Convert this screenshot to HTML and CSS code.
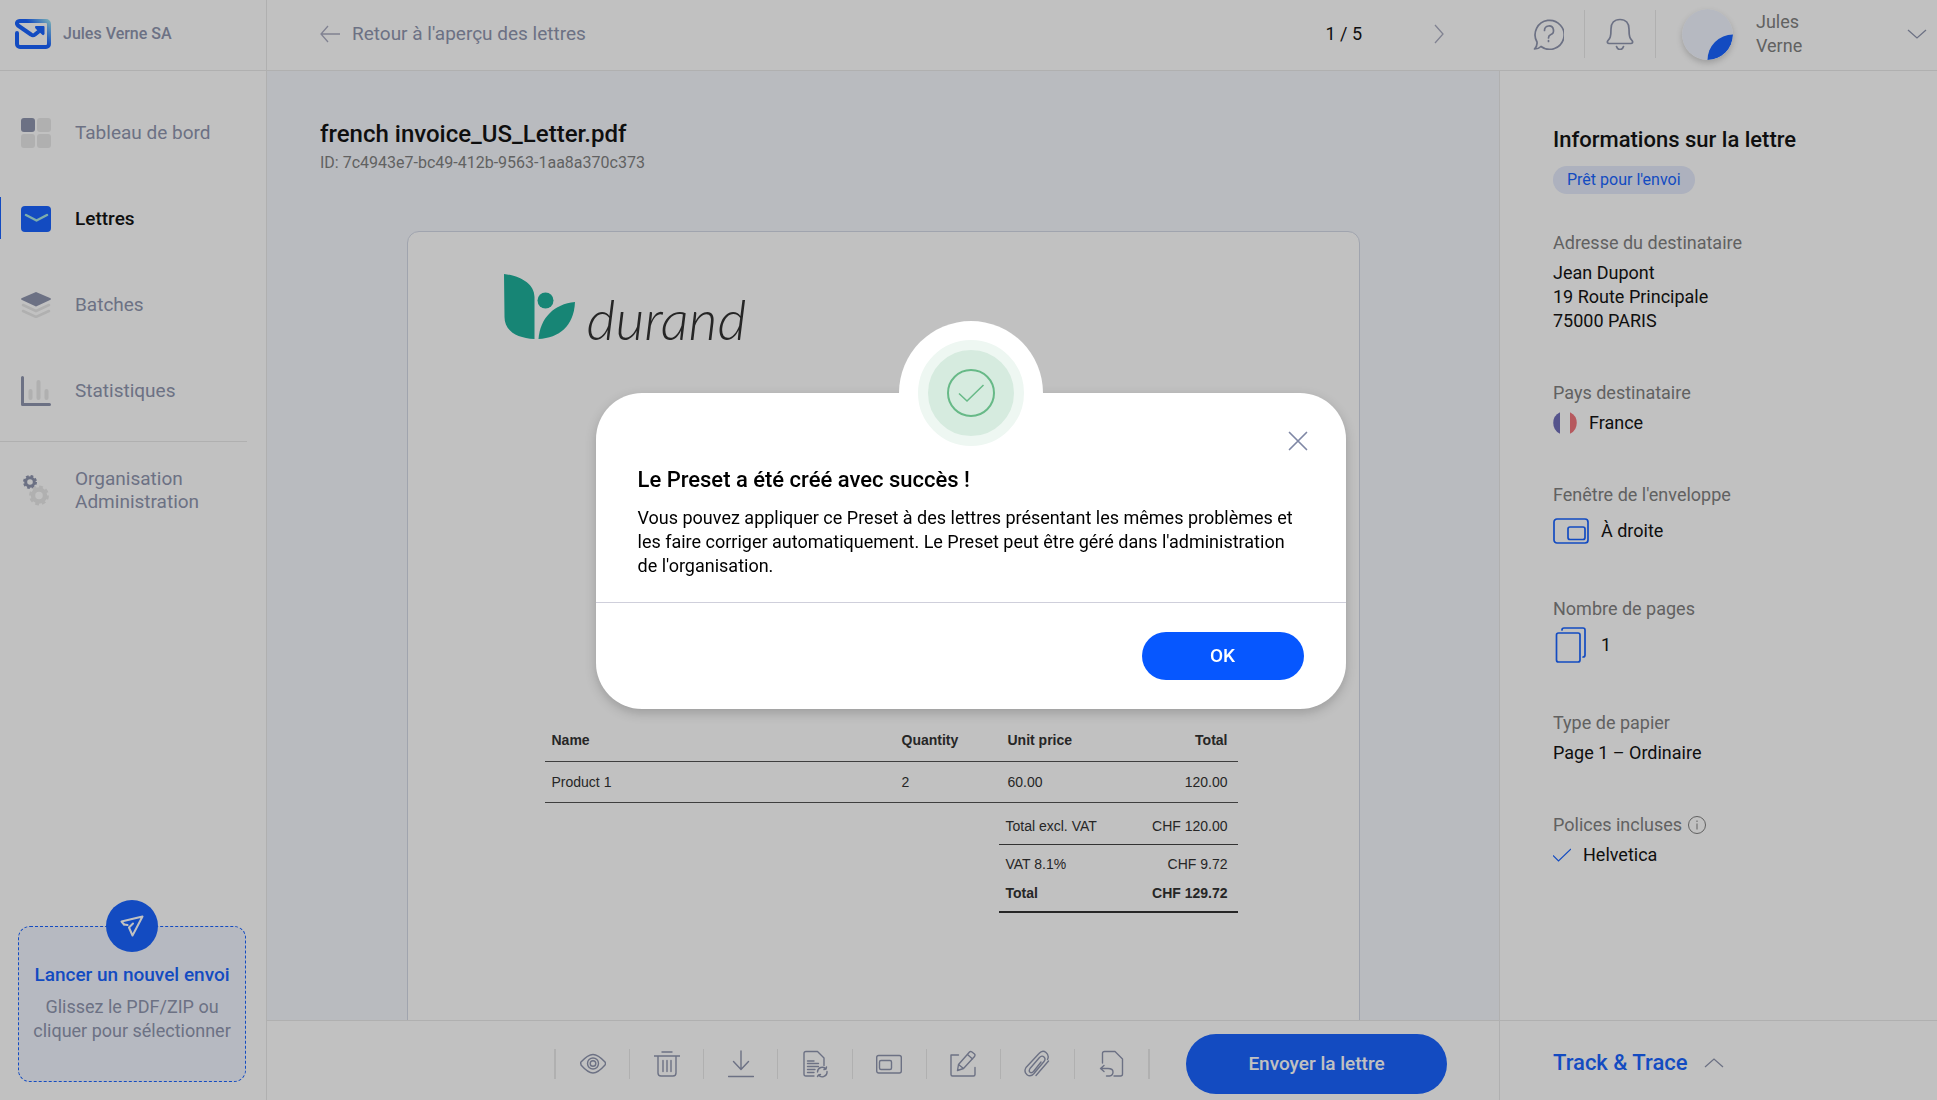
FILE: index.html
```html
<!DOCTYPE html>
<html lang="fr">
<head>
<meta charset="utf-8">
<meta name="viewport" content="width=device-width, initial-scale=1">
<title>french invoice_US_Letter.pdf</title>
<link rel="stylesheet" href="styles.css">
</head>
<body>
<div class="app">
  <header class="topbar">
    <a class="brand" href="#">
      <svg width="36" height="30" viewBox="0 0 36 30" fill="none" aria-hidden="true">
        <defs><linearGradient id="brandFade" x1="18" y1="16" x2="36" y2="0" gradientUnits="userSpaceOnUse"><stop offset="0.2" stop-color="#0657ff"/><stop offset="1" stop-color="#a5f0ee"/></linearGradient></defs>
        <path d="M2 14V25a3 3 0 0 0 3 3h26a3 3 0 0 0 3-3V5a3 3 0 0 0-3-3H5C2 2 1 4.500 3 6.500L16 15.500q2 1.500 4 0l5-4" stroke="url(#brandFade)" stroke-width="4" stroke-linecap="round" stroke-linejoin="round"/>
        <path d="M20 8q0-1 1-1h7.500q1 0 1 1v7q-1 2-2.500 .5l-6-5.500q-1-1-1-2z" fill="#0657ff"/>
      </svg>
      <span>Jules Verne SA</span>
    </a>
    <nav class="letter-nav" aria-label="Lettres">
      <a class="back" href="#">
        <svg width="20" height="18" viewBox="0 0 20 18" class="line pale" aria-hidden="true"><path d="M20 9H1M8 1L1 9l7 8"/></svg>
        <span>Retour à l'aperçu des lettres</span>
      </a>
      <span class="pager">1 / 5</span>
      <button class="plain" type="button" aria-label="Lettre suivante"><svg width="10" height="20" viewBox="0 0 10 20" class="line pale" aria-hidden="true"><path d="M1 1l8 9-8 9"/></svg></button>
    </nav>
    <div class="account">
      <button class="plain" type="button" aria-label="Aide"><svg width="31" height="32" viewBox="0 0 31 32" class="line thick" aria-hidden="true"><path d="M8 28.500a14.500 14.500 0 1 0-4-4.500q.5 4-2.500 7 4 0 6.500-2.500z"/><path d="M11.500 12.500a4.500 4.500 0 1 1 6 4.200q-2 .8-2 3.300M15.500 22.500v1"/></svg></button>
      <button class="plain bell" type="button" aria-label="Notifications"><svg width="28" height="32" viewBox="0 0 28 32" class="line thick" aria-hidden="true"><path d="M14 1.500c-6 0-9 4-9 9.500 0 8-1 9.500-3 11.500-1.500 2 0 3 1 3h22c1 0 2.500-1 1-3-2-2-3-3.500-3-11.500 0-5.500-3-9.500-9-9.500zM10.500 28.500q1 3 3.500 3t3.500-3"/></svg></button>
      <button class="plain profile" type="button">
        <svg class="avatar" width="51" height="51" viewBox="0 0 51 51" aria-hidden="true"><circle cx="25.500" cy="25.500" r="25.500" fill="#f0f4ff"/><path d="M25.500 51A25.500 25.500 0 0 1 51 25.500 25.500 25.500 0 0 1 25.500 51z" fill="#0657ff"/></svg>
        <span class="profile-name">Jules<br>Verne</span>
        <svg width="20" height="10" viewBox="0 0 20 10" class="line" aria-hidden="true"><path d="M1 1l9 8 9-8"/></svg>
      </button>
    </div>
  </header>

  <aside class="sidebar">
    <nav class="menu" aria-label="Menu principal">
      <a class="item" href="#"><svg width="30" height="30" viewBox="0 0 30 30" aria-hidden="true"><rect width="14" height="14" rx="3" fill="#868da8"/><rect x="16" width="14" height="14" rx="3" fill="#e7e7e7"/><rect y="16" width="14" height="14" rx="3" fill="#e7e7e7"/><rect x="16" y="16" width="14" height="14" rx="3" fill="#e7e7e7"/></svg><span>Tableau de bord</span></a>
      <a class="item active" href="#" aria-current="page"><svg width="30" height="26" viewBox="0 0 30 26" aria-hidden="true"><rect width="30" height="26" rx="4" fill="#0657ff"/><path d="M5 9l10.500 5.500L26 9" fill="none" stroke="#9fe3e0" stroke-width="2.500" stroke-linecap="round" stroke-linejoin="round"/></svg><span>Lettres</span></a>
      <a class="item" href="#"><svg width="30" height="26" viewBox="0 0 30 26" aria-hidden="true"><path d="M2 13l13 6 13-6M2 19l13 6 13-6" fill="none" stroke="#e7e7e7" stroke-width="2.500" stroke-linecap="round"/><path d="M15 0l14 6q2 1 0 2l-14 6.500L1 8q-2-1 0-2z" fill="#868da8"/></svg><span>Batches</span></a>
      <a class="item" href="#"><svg width="30" height="30" viewBox="0 0 30 30" fill="none" stroke-linecap="round" aria-hidden="true"><path d="M9.500 15v7M17.500 6v16M25.500 15v7" stroke="#e7e7e7" stroke-width="4"/><path d="M1.500 1.500v27h27" stroke="#868da8" stroke-width="3" stroke-linejoin="round"/></svg><span>Statistiques</span></a>
      <a class="item admin" href="#"><svg width="30" height="32" viewBox="0 0 30 32" fill="none" aria-hidden="true"><circle cx="9" cy="8" r="4.300" stroke="#868da8" stroke-width="3"/><circle cx="9" cy="8" r="6" stroke="#868da8" stroke-width="2" stroke-dasharray="2.700 2"/><circle cx="18" cy="21.500" r="6" stroke="#e7e7e7" stroke-width="4.500"/><circle cx="18" cy="21.500" r="8.700" stroke="#e7e7e7" stroke-width="2.500" stroke-dasharray="3.800 3"/></svg><span>Organisation<br>Administration</span></a>
    </nav>
    <button class="dropzone" type="button">
      <span class="dropzone-icon"><svg width="24" height="22" viewBox="0 0 24 22" fill="none" stroke="#fff" stroke-width="2" stroke-linejoin="round" stroke-linecap="round" aria-hidden="true"><path d="M4 9.500L1.500 6.500 22.500 1.500 12.500 20.500 9 12.500l4-4"/><path d="M4 9.500l3.500 .5"/></svg></span>
      <strong>Lancer un nouvel envoi</strong>
      <span>Glissez le PDF/ZIP ou cliquer pour sélectionner</span>
    </button>
  </aside>

  <main class="viewer">
    <h1>french invoice_US_Letter.pdf</h1>
    <p class="doc-id">ID: 7c4943e7-bc49-412b-9563-1aa8a370c373</p>
    <article class="sheet">
      <div class="sheet-logo">
        <svg width="71" height="65" viewBox="0 0 71 65" fill="#0caa93" aria-hidden="true"><path d="M0 0C17 2 30.500 10 30.500 23V65C13 64 .5 57 .5 43z"/><circle cx="41.500" cy="26.500" r="8"/><path d="M34.500 65C36 44 50 30 71 28 70 52 55 64 34.500 65z"/></svg>
        <span>durand</span>
      </div>
      <table class="lines">
        <thead><tr><th>Name</th><th>Quantity</th><th>Unit price</th><th>Total</th></tr></thead>
        <tbody><tr><td>Product 1</td><td>2</td><td>60.00</td><td>120.00</td></tr></tbody>
      </table>
      <table class="totals">
        <tbody>
          <tr class="net"><td>Total excl. VAT</td><td>CHF 120.00</td></tr>
          <tr class="vat"><td>VAT 8.1%</td><td>CHF 9.72</td></tr>
          <tr class="gross"><td>Total</td><td>CHF 129.72</td></tr>
        </tbody>
      </table>
    </article>
  </main>

  <aside class="info">
    <h2>Informations sur la lettre</h2>
    <span class="badge">Prêt pour l'envoi</span>
    <dl>
      <div><dt>Adresse du destinataire</dt><dd>Jean Dupont<br>19 Route Principale<br>75000 PARIS</dd></div>
      <div><dt>Pays destinataire</dt><dd class="row"><svg width="24" height="24" viewBox="0 0 24 24" aria-hidden="true"><path d="M7 1.200a12 12 0 0 0 0 21.600z" fill="#6563b4"/><path d="M17 1.200a12 12 0 0 1 0 21.600z" fill="#f06a72"/></svg>France</dd></div>
      <div><dt>Fenêtre de l'enveloppe</dt><dd class="row tall"><svg width="36" height="26" viewBox="0 0 36 26" fill="none" stroke="#0657ff" stroke-width="1.700" aria-hidden="true"><rect x="1" y="1" width="34" height="24" rx="3"/><rect x="15" y="9" width="17" height="12.500" rx="2"/></svg>À droite</dd></div>
      <div><dt>Nombre de pages</dt><dd class="row tall"><svg width="36" height="36" viewBox="0 0 36 36" fill="none" stroke="#0657ff" stroke-width="1.700" stroke-linecap="round" aria-hidden="true"><rect x="3.500" y="6" width="23.500" height="29" rx="2"/><path d="M9 3q0-2 2-2h19q2 0 2 2v25q0 2-2 2"/></svg>1</dd></div>
      <div><dt>Type de papier</dt><dd>Page 1 – Ordinaire</dd></div>
      <div><dt class="with-hint">Polices incluses <svg width="18" height="18" viewBox="0 0 18 18" fill="none" stroke="#767676" aria-hidden="true"><circle cx="9" cy="9" r="8.500"/><path d="M9 7.500v6M9 4.500v1.500"/></svg></dt><dd class="row"><svg width="18" height="14" viewBox="0 0 18 14" fill="none" stroke="#0657ff" stroke-width="1.200" aria-hidden="true"><path d="M0 7.500L5.500 13 18 1"/></svg>Helvetica</dd></div>
    </dl>
  </aside>

  <footer class="actions">
    <div class="tools" role="toolbar" aria-label="Actions sur la lettre">
      <button type="button" aria-label="Aperçu"><svg width="26" height="28" viewBox="0 0 26 28"><path d="M1 14q-.8-1 0-2Q8 4.500 13 4.500t12 7.500q1 1.500 0 3-7 8-12 8T1 15z"/><circle cx="13" cy="13.500" r="5.500"/><circle cx="13" cy="13.500" r="2.800"/></svg></button>
      <button type="button" aria-label="Supprimer"><svg width="26" height="28" viewBox="0 0 26 28"><path d="M8 2h10M0 6h26M4 6v17q0 3 3 3h12q3 0 3-3V6M9 10.500v11M13 10.500v11M17 10.500v11"/></svg></button>
      <button type="button" aria-label="Télécharger"><svg width="26" height="28" viewBox="0 0 26 28"><path d="M13 1v18M5.500 11.500L13 19.500l7.500-8M.5 26.500h25"/></svg></button>
      <button type="button" aria-label="Régénérer"><svg width="26" height="28" viewBox="0 0 26 28"><path d="M12 26H4q-2 0-2-2V3.500q0-2 2-2h11.500L22 8v7.500M5.500 11H12M5.500 13.500h11M5.500 16.500h11M5.500 19.500h7.500M5.500 22.500H12M15.500 22a4.800 4.800 0 0 1 8.500-3l.5-2M24 19l-2 .5M25 21.500a4.800 4.800 0 0 1-8.500 3.500l-1 1.500M16.500 25l2-.5"/></svg></button>
      <button type="button" aria-label="Fenêtre"><svg width="26" height="28" viewBox="0 0 26 28"><rect x=".7" y="5.500" width="24.600" height="17.500" rx="2"/><rect x="3.500" y="10.500" width="12" height="9" rx="1.500"/></svg></button>
      <button type="button" aria-label="Modifier"><svg width="26" height="28" viewBox="0 0 26 28"><path d="M8.500 5H1v19.500q0 1.500 1.500 1.500h21q1.500 0 1.500-1.500v-7M7.500 20.500l1-6L19.500 2q1-1 2.500 0l2.500 2q1 1 0 2.500L13.500 18.500zM8.500 14.500l5 4M17.500 4.500l5 4.500"/></svg></button>
      <button type="button" aria-label="Joindre"><svg width="26" height="28" viewBox="0 0 26 28"><path d="M17 12L9.500 21.500q-2 2-3.500 .8t0-3.800L15.500 7.500q2.500-2.500 4.500-.5t0 4.500L10 23.500q-3.500 4-7 1.200T2 17.500L15 3.500q3.500-4 7-1t1.500 7"/><path d="M24.500 11L12 25.500"/></svg></button>
      <button type="button" aria-label="Retourner"><svg width="26" height="28" viewBox="0 0 26 28"><path d="M4.500 13V3.500q0-2 2-2H17L24.500 9v15q0 2-2 2H16M6 15.500L2.500 18.500l3.500 3M2.500 18.500H10q5 0 5 3.500t-3.500 4H8.500"/></svg></button>
    </div>
    <button class="send" type="button">Envoyer la lettre</button>
  </footer>
  <div class="trace"><button class="plain" type="button">Track &amp; Trace <svg width="20" height="10" viewBox="0 0 20 10" class="line" aria-hidden="true"><path d="M1 9l9-8 9 8"/></svg></button></div>
</div>

<div class="overlay">
  <section class="modal" role="dialog" aria-modal="true" aria-labelledby="modal-title">
    <div class="halo"><span><svg width="48" height="48" viewBox="0 0 48 48" fill="none" stroke="#67b987" aria-hidden="true"><circle cx="24" cy="24" r="23" stroke-width="2"/><path d="M12 24.500l8 7.500L36.500 16" stroke-width="1.500"/></svg></span></div>
    <div class="modal-body">
      <button class="plain close" type="button" aria-label="Fermer"><svg width="20" height="20" viewBox="0 0 20 20" fill="none" stroke="#7f87a5" stroke-width="1.700" stroke-linecap="round" aria-hidden="true"><path d="M1.500 1.500l17 17M18.500 1.500l-17 17"/></svg></button>
      <h2 id="modal-title">Le Preset a été créé avec succès !</h2>
      <p>Vous pouvez appliquer ce Preset à des lettres présentant les mêmes problèmes et les faire corriger automatiquement. Le Preset peut être géré dans l'administration de l'organisation.</p>
    </div>
    <div class="modal-actions"><button class="ok" type="button">OK</button></div>
  </section>
</div>
</body>
</html>
```
FILE: styles.css
```css
:root {
  --blue: #0657ff;
  --muted: #868da8;
  --grey: #767676;
  --rule: #e7e7e7;
}

* { box-sizing: border-box; }

body {
  margin: 0;
  font: 18px/24px Roboto, sans-serif;
  color: #000;
}

h1, h2, p, dl, dd { margin: 0; }
h1, h2 { font-weight: 500; }
a { color: inherit; text-decoration: none; }
button { font: inherit; color: inherit; cursor: pointer; }
svg { display: block; flex: none; }

.plain {
  display: flex;
  align-items: center;
  padding: 0;
  border: 0;
  background: none;
  text-align: left;
}

.line { fill: none; stroke: var(--muted); stroke-width: 1.3; }
.line.thick { stroke-width: 1.7; stroke-linecap: round; stroke-linejoin: round; }
.line.pale { stroke: #a3a5bb; }

.app {
  display: grid;
  grid-template: 71px minmax(0, 1fr) 80px / 267px minmax(0, 1fr) 438px;
  height: 100vh;
  background: #fff;
}

/* Top bar */
.topbar {
  grid-column: 1 / -1;
  display: grid;
  grid-template-columns: subgrid;
  border-bottom: 1px solid var(--rule);
}

.brand {
  display: flex;
  align-items: center;
  gap: 12px;
  padding: 0 0 2px 15px;
  border-right: 1px solid var(--rule);
  font-size: 16px;
  font-weight: 500;
  color: var(--muted);
}

.letter-nav {
  display: flex;
  align-items: center;
  padding: 0 55px 2px 53px;
}

.back {
  display: flex;
  align-items: center;
  gap: 12px;
  margin-right: auto;
  font-size: 19px;
  color: var(--muted);
}

.pager { margin-right: 72px; }

.account {
  display: flex;
  align-items: center;
  padding: 0 10px 2px 34px;
}

.bell {
  height: 48px;
  margin-left: 20px;
  padding: 0 21px;
  border: solid var(--rule);
  border-width: 0 1px;
}

.profile {
  flex: 1;
  gap: 23px;
  margin-left: 26px;
  color: var(--grey);
}

.profile-name { flex: 1; }
.avatar { border-radius: 50%; box-shadow: 0 3px 6px rgba(0, 0, 0, .2); }

/* Sidebar */
.sidebar {
  grid-row: 2 / 4;
  display: flex;
  flex-direction: column;
  justify-content: space-between;
  padding: 18px 0;
  border-right: 1px solid var(--rule);
}

.menu { font-size: 19px; color: var(--muted); }

.item {
  display: grid;
  grid-template-columns: 54px 1fr;
  align-items: center;
  height: 86px;
  padding: 2px 0 0 21px;
}

.active {
  color: #000;
  font-weight: 500;
  background: linear-gradient(var(--blue), var(--blue)) left / 1px 42px no-repeat;
}

.admin {
  height: 94px;
  margin: 8px 19px 0 0;
  border-top: 1px solid var(--rule);
  line-height: 23px;
}

.dropzone {
  display: flex;
  flex-direction: column;
  align-items: center;
  gap: 8px;
  height: 156px;
  margin: 0 20px 0 18px;
  padding: 0 12px;
  border: 1px dashed var(--blue);
  border-radius: 12px;
  background: #f0f4ff;
  color: var(--muted);
}

.dropzone strong { font-size: 19px; font-weight: 500; color: var(--blue); white-space: nowrap; }

.dropzone-icon {
  display: grid;
  place-items: center;
  width: 52px;
  height: 52px;
  margin: -27px 0 3px;
  border-radius: 50%;
  background: var(--blue);
}

/* Document viewer */
.viewer {
  overflow: hidden;
  padding: 48px 53px 0;
  background: #f4f6fd;
}

.viewer h1 { font-size: 24px; line-height: 30px; }
.doc-id { margin-top: 2px; font-size: 16px; color: var(--grey); }

.sheet {
  max-width: 953px;
  min-height: 1230px;
  margin: 56px auto 0;
  padding: 42px 121px 0 137px;
  border: 1px solid #d0d6e4;
  border-radius: 12px;
  background: #fff;
  font: 14px/20px "Liberation Sans", sans-serif;
  color: #222;
}

.sheet-logo {
  display: flex;
  align-items: flex-start;
  gap: 12px;
  margin-left: -41px;
  font: italic 300 56px/90px Lato, sans-serif;
}

.sheet table { border-collapse: collapse; }
.sheet th { text-align: left; }
.sheet td, .sheet th { padding: 0 10px 0 7px; }
.sheet td:last-child, .sheet th:last-child { text-align: right; }

.lines { width: 100%; margin-top: 356px; table-layout: fixed; }
.lines tr { height: 41px; border-bottom: 1px solid #444; }
.lines th:nth-child(2) { width: 106px; }
.lines th:nth-child(3) { width: 122px; }
.lines th:nth-child(4) { width: 115px; }

.totals { width: 239px; margin: 6px 0 0 auto; }
.totals .net { height: 36px; border-bottom: 1px solid #333; }
.totals .vat { height: 38px; }
.totals .gross { height: 28px; border-bottom: 2px solid #222; font-weight: 700; }
.totals .gross td { padding-bottom: 8px; }

/* Letter details */
.info {
  padding: 55px 53px 0;
  border-left: 1px solid var(--rule);
}

.info h2 { font-size: 22px; line-height: 28px; }

.badge {
  display: inline-block;
  margin-top: 12px;
  padding: 2px 14px;
  border-radius: 14px;
  background: #e2e8fb;
  font-size: 16px;
  color: var(--blue);
}

.info dl { display: grid; gap: 48px; margin-top: 37px; }
.info dt { margin-bottom: 6px; color: var(--grey); }
.row { display: flex; align-items: center; gap: 12px; }
.tall { height: 36px; }
.with-hint { display: flex; align-items: center; gap: 6px; }

/* Bottom bar */
.actions {
  display: flex;
  align-items: center;
  justify-content: flex-end;
  gap: 36px;
  padding: 6px 52px 0 0;
  border-top: 1px solid var(--rule);
}

.tools { display: flex; width: 596px; border-right: 2px solid var(--rule); }

.tools button {
  flex: 1;
  height: 30px;
  padding: 0;
  border: 0;
  border-left: 1px solid var(--rule);
  background: none;
}

.tools button:first-child { border-left-width: 2px; }

.tools svg {
  margin: 0 auto;
  fill: none;
  stroke: var(--muted);
  stroke-width: 1.4;
  stroke-linecap: round;
  stroke-linejoin: round;
}

.send, .ok {
  border: 0;
  background: var(--blue);
  color: #fff;
  font-size: 19px;
  font-weight: 500;
}

.send { width: 261px; height: 60px; border-radius: 30px; }

.trace {
  display: flex;
  align-items: center;
  padding: 4px 53px 0;
  border: solid var(--rule);
  border-width: 1px 0 0 1px;
}

.trace button { gap: 16px; font-size: 22px; font-weight: 500; color: var(--blue); }

/* Confirmation */
.overlay {
  position: fixed;
  inset: 0;
  display: flex;
  align-items: center;
  justify-content: center;
  padding: 2px 0 0 4px;
  background: rgba(50, 50, 50, .3);
}

.modal {
  position: relative;
  width: 750px;
  border-radius: 46px;
  background: #fff;
  box-shadow: 0 4px 12px rgba(0, 0, 0, .2);
}

.halo {
  position: absolute;
  top: -72px;
  left: calc(50% - 72px);
  display: grid;
  place-items: center;
  width: 144px;
  height: 144px;
  border-radius: 50%;
  background: #fff;
}

.halo span {
  display: grid;
  place-items: center;
  width: 106px;
  height: 106px;
  border: 10px solid #eef7f2;
  border-radius: 50%;
  background: #d6ebdf;
}

.modal-body { padding: 73px 42px 24px; border-bottom: 1px solid #cfcfdb; }
.modal-body h2 { margin-bottom: 12px; font-size: 22px; line-height: 28px; }
.close { position: absolute; top: 38px; right: 38px; }
.modal-actions { display: flex; justify-content: flex-end; padding: 29px 42px; }
.ok { width: 162px; height: 48px; border-radius: 24px; }
```
